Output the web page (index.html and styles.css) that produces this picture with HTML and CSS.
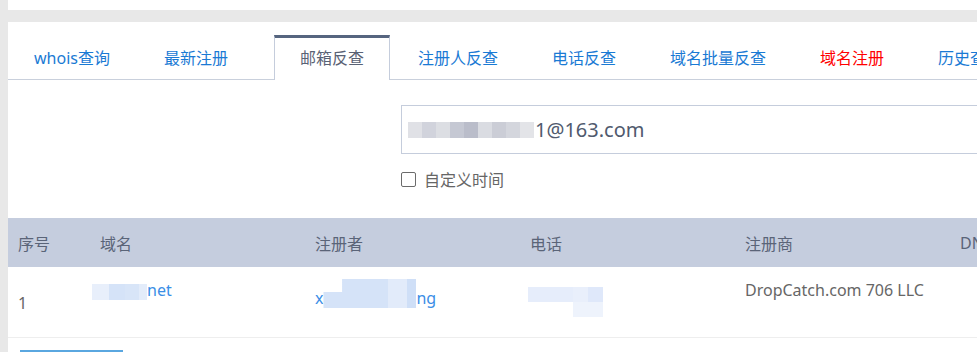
FILE: index.html
```html
<!DOCTYPE html>
<html>
<head>
    <meta charset="utf-8">
    <title>邮箱反查</title>
    <link rel="stylesheet" href="styles.css">
</head>
<body>
    <div class="top-panel"></div>

    <div class="card">
        <ul class="tabs">
            <li><a href="#">whois查询</a></li>
            <li><a href="#">最新注册</a></li>
            <li class="active"><a href="#">邮箱反查</a></li>
            <li><a href="#">注册人反查</a></li>
            <li><a href="#">电话反查</a></li>
            <li><a href="#">域名批量反查</a></li>
            <li><a href="#" class="hot">域名注册</a></li>
            <li><a href="#">历史查询</a></li>
        </ul>

        <form class="search">
            <div class="search-input">
                <span class="mask">
                    <i style="background:#e0e1e6"></i><i style="background:#d1d3dc"></i><i style="background:#dcdee3"></i><i style="background:#c5c8d3"></i><i style="background:#babdca"></i><i style="background:#dadce2"></i><i style="background:#cbcdd6"></i><i style="background:#d4d6dd"></i><i style="background:#e3e4e8"></i>
                </span>1@163.com
            </div>
            <label class="custom-time">
                <span class="check"></span>自定义时间
            </label>
        </form>

        <table class="result">
            <colgroup>
                <col class="c-no">
                <col class="c-wide">
                <col class="c-wide">
                <col class="c-wide">
                <col class="c-wide">
                <col class="c-wide">
            </colgroup>
            <thead>
                <tr>
                    <th>序号</th>
                    <th>域名</th>
                    <th>注册者</th>
                    <th>电话</th>
                    <th>注册商</th>
                    <th>DNS</th>
                </tr>
            </thead>
            <tbody>
                <tr>
                    <td class="col-no">1</td>
                    <td><a href="#"><span class="blur blur-domain"></span>net</a></td>
                    <td><a href="#">x<span class="blur blur-name"></span>ng</a></td>
                    <td><span class="blur-phone"><i></i><i></i></span></td>
                    <td>DropCatch.com 706 LLC</td>
                    <td></td>
                </tr>
            </tbody>
        </table>

        <div class="pager">
            <span class="btn"></span>
        </div>
    </div>
</body>
</html>
```

FILE: styles.css
```css
html, body {
    margin: 0;
    height: 100%;
    overflow: hidden;
}

body {
    background: #e8e8e8;
    padding-left: 8px;
    font-family: "Noto Sans", "Noto Sans CJK SC", sans-serif;
    font-size: 16px;
}

.top-panel {
    height: 10px;
    background: white;
}

.card {
    width: 1300px;
    margin-top: 12px;
    padding-top: 13px;
    background: white;
    height: 400px;
}

/* tabs */
.tabs {
    display: flex;
    list-style: none;
    margin: 0;
    padding: 0;
    height: 44px;
    border-bottom: 1px solid #c9d0dc;
}

.tabs li {
    border: 1px solid transparent;
    border-top: 3px solid transparent;
    border-bottom: none;
    padding: 0 25px;
    margin-right: 2px;
    line-height: 41px;
}

.tabs li.active {
    margin-left: 18px;
    border-color: #c5cddc;
    border-top-color: #56657f;
    background: white;
    height: 42px;
}

.tabs a {
    color: #1a7ad4;
    text-decoration: none;
}

.tabs .active a {
    color: #5a6275;
}

.tabs a.hot {
    color: #ff0000;
}

/* search form */
.search {
    padding: 25px 0 0 393px;
}

.search-input {
    height: 47px;
    border: 1px solid #c5cddc;
    padding-left: 6px;
    display: flex;
    align-items: center;
    font-size: 20px;
    color: #505a6e;
}

.mask {
    display: flex;
    margin-right: 1px;
}

.mask i {
    width: 14px;
    height: 16px;
}

.custom-time {
    display: flex;
    align-items: center;
    margin-top: 16px;
    color: #666;
    height: 18px;
}

.check {
    width: 13px;
    height: 13px;
    border: 1px solid #6b6b6b;
    border-radius: 2px;
    margin-right: 8px;
}

/* result table */
.result {
    margin-top: 30px;
    border-collapse: collapse;
    table-layout: fixed;
    width: 1157px;
}

.result col.c-no {
    width: 82px;
}

.result col.c-wide {
    width: 215px;
}

.result th,
.result td {
    text-align: left;
    padding: 0 10px;
    white-space: nowrap;
}

.result th {
    height: 49px;
    background: #c5cdde;
    color: #5a6478;
    font-weight: normal;
}

.result td {
    height: 70px;
    border-bottom: 1px solid #eeeeee;
    color: #666;
    vertical-align: top;
    padding-top: 12px;
    box-sizing: border-box;
}

.result td.col-no {
    vertical-align: middle;
    padding-top: 2px;
}

.result a {
    color: #3a8ee6;
    text-decoration: none;
}

.blur {
    display: inline-block;
    vertical-align: -4px;
    height: 16px;
}

.blur-domain {
    width: 55px;
    margin-left: -8px;
    background: linear-gradient(90deg, #e8effb 0 30%, #d5e3f8 30% 60%, #d8e5f8 60% 85%, #e3ecfa 85%);
}

.blur-name {
    width: 93px;
    height: 29px;
    vertical-align: -4px;
    background: linear-gradient(90deg, #d5e3f8 0 70%, #e2ebfa 70% 90%, #cfdff7 90%);
    clip-path: polygon(0 45%, 20% 45%, 20% 0, 100% 0, 100% 100%, 0 100%);
}

.blur-phone {
    display: block;
    width: 75px;
    height: 30px;
    margin-top: 8px;
    margin-left: -2px;
}

.blur-phone i:first-child {
    display: block;
    width: 75px;
    height: 15px;
    background: linear-gradient(90deg, #e6edfb 0 60%, #e9effb 60% 80%, #dfe8fa 80%);
}

.blur-phone i:last-child {
    display: block;
    width: 30px;
    height: 15px;
    margin-left: 45px;
    background: #eef3fc;
}

.pager {
    padding: 12px 12px 0;
}

.btn {
    display: block;
    width: 103px;
    height: 30px;
    background: #5aa7e0;
}
```
